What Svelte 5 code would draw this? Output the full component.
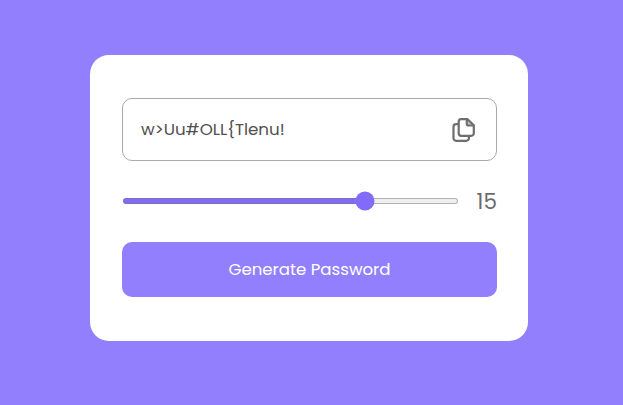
<script>
  const characters = 'abcdefghijklmnopqrstuvwxyzABCDEFGHIJKLMNOPQRSTUVWXYZ0123456789!#$%&{}<>?';
  const min = 1;
  const max = 20;
  let length = $state(15);
  let password = $state('w>Uu#OLL{Tlenu!');
  let fill = $derived(((length - min) / (max - min)) * 100);

  function generate() {
    password = Array.from({ length }, () => characters[Math.floor(Math.random() * characters.length)]).join('');
  }

  function copy() {
    navigator.clipboard?.writeText(password);
  }
</script>

<main>
  <section class="card">
    <div class="output">
      <span class="password">{password}</span>
      <button class="copy" aria-label="Copy password" onclick={copy}>
        <svg width="24" height="24" viewBox="0 0 24 24" fill="none" stroke="#6e6e6e" stroke-width="2.2" stroke-linejoin="round" stroke-linecap="round">
          <path d="M15.6 1.2H9.2A2.5 2.5 0 0 0 6.7 3.7v11.6a2.5 2.5 0 0 0 2.5 2.5h10.1a2.5 2.5 0 0 0 2.5-2.5V7.4Z" />
          <path d="M14.8 1.5v4.2a1.8 1.8 0 0 0 1.8 1.8H21.6" />
          <path d="M15.7 2.4v4.4h4.6Z" fill="#6e6e6e" fill-opacity="0.4" stroke="none" />
          <path d="M6.2 6.2H4.1a2.6 2.6 0 0 0-2.6 2.6v11.4a2.6 2.6 0 0 0 2.6 2.6h10.2a2.6 2.6 0 0 0 2.6-2.6v-1.8" />
        </svg>
      </button>
    </div>
    <div class="range">
      <input type="range" aria-label="Length" {min} {max} bind:value={length} style="--fill: {fill}%" />
      <span class="length">{length}</span>
    </div>
    <button class="generate" onclick={generate}><span>Generate Password</span></button>
  </section>
</main>

<style>
  main {
    box-sizing: border-box;
    height: 100vh;
    padding-top: 55px;
    background: #927ffd;
    font-family: Poppins, Inter, "Open Sans", sans-serif;
  }

  .card {
    box-sizing: border-box;
    width: 438px;
    height: 286px;
    margin-left: 90px;
    padding: 43px 31px 44px 32px;
    border-radius: 19px;
    background: #fff;
  }

  .output {
    box-sizing: border-box;
    display: flex;
    align-items: center;
    justify-content: space-between;
    height: 63px;
    padding: 0 20px 0 18px;
    border: 1px solid #aaa;
    border-radius: 10px;
  }

  .password {
    margin-bottom: 2px;
    color: #505050;
    font-size: 16.7px;
    line-height: 24px;
    white-space: nowrap;
  }

  button {
    border: 0;
    padding: 0;
    font: inherit;
    cursor: pointer;
  }

  .copy {
    display: flex;
    background: none;
  }

  .range {
    display: flex;
    align-items: center;
    height: 81px;
    padding-left: 1px;
  }

  input {
    appearance: none;
    flex: none;
    width: 335px;
    height: 20px;
    margin: 0 18.5px 1px 0;
    background: none;
  }

  input::-webkit-slider-runnable-track {
    box-sizing: border-box;
    height: 6px;
    border: 1px solid rgb(118 118 118 / 0.5);
    border-radius: 3px;
    background: linear-gradient(to right, #826afb var(--fill), #efefef var(--fill)) border-box;
  }

  input::-webkit-slider-thumb {
    appearance: none;
    width: 19px;
    height: 19px;
    margin-top: -8px;
    border-radius: 50%;
    background: #826afb;
    transform: translate(0.5px, 0.5px);
  }

  .length {
    color: #6b6b6b;
    font-size: 21.5px;
    line-height: 32px;
  }

  .generate {
    display: block;
    width: 100%;
    height: 55px;
    border-radius: 10px;
    background: #927ffd;
    color: #fff;
    font-size: 16.6px;
  }
</style>
